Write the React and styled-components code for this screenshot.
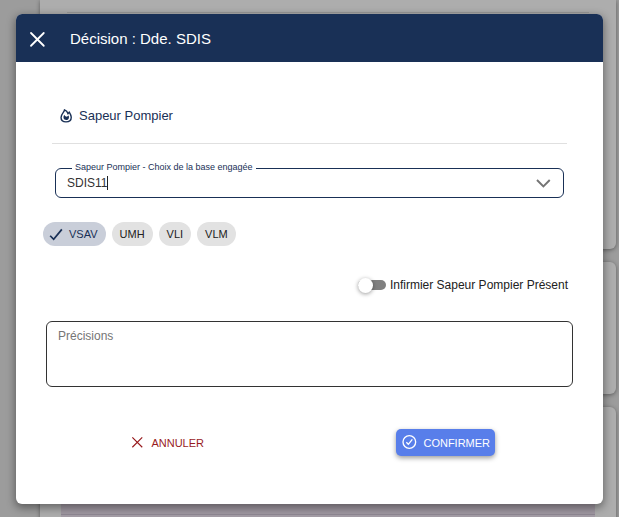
import { useState } from "react";
import styled, { createGlobalStyle } from "styled-components";

const navy = "#193056";

const GlobalStyle = createGlobalStyle`
  * {
    box-sizing: border-box;
  }
  body {
    margin: 0;
    background: #9e9e9e;
    font-family: "Liberation Sans", Arial, sans-serif;
    color: #212121;
  }
  button, input, textarea {
    font-family: inherit;
  }
`;

const Page = styled.div`
  position: relative;
  min-height: 100vh;
`;

const Backdrop = styled.div`
  position: absolute;
  inset: 0;
  display: flex;
  flex-direction: column;
  gap: 13px;
  padding: 0 3px 0 40px;
  overflow: hidden;
  background: #9c9c9c;
`;

const Card = styled.div`
  flex: none;
  height: ${(props) => props.$height};
  padding: ${(props) => props.$padding || "0"};
  background: #adadad;
  border-radius: ${(props) => (props.$first ? "0 0 6px 6px" : "6px")};
  box-shadow: 0 1px 4px rgba(0, 0, 0, 0.4);
`;

const CardLine = styled.div`
  height: 1px;
  margin: 0 6px;
  background: #999;
`;

const CardBand = styled.div`
  height: 100%;
  background: linear-gradient(#a098a2 107px, #8f8893 107px, #8f8893 108px, #a39ca5 108px);
`;

const Dialog = styled.div`
  position: relative;
  padding: 14px 16px 13px;
`;

const DialogCard = styled.section`
  overflow: hidden;
  background: white;
  border-radius: 6px;
  box-shadow: 0 3px 8px 1px rgba(0, 0, 0, 0.4);
`;

const Header = styled.header`
  display: flex;
  align-items: center;
  gap: 24px;
  height: 48px;
  padding: 1px 12px 0;
  background: ${navy};
  color: white;
`;

const CloseButton = styled.button`
  display: flex;
  padding: 0;
  border: 0;
  background: none;
  color: inherit;
`;

const Title = styled.h1`
  margin: 0;
  font-size: 15px;
  font-weight: 400;
  line-height: 21px;
`;

const Section = styled.div`
  display: flex;
  align-items: center;
  gap: 6px;
  margin: 0 36px;
  padding: 44px 7px 17px;
  border-bottom: 1px solid #e0e0e0;
  color: ${navy};
`;

const SectionTitle = styled.h2`
  margin: 0;
  font-size: 13px;
  font-weight: 400;
  line-height: 20px;
`;

const Field = styled.fieldset`
  display: flex;
  align-items: center;
  height: 37px;
  margin: 17px 39px 0;
  padding: 0 11px 7px;
  border: 1px solid ${navy};
  border-radius: 6px;
`;

const Legend = styled.legend`
  margin-left: 5px;
  padding: 0 3px 2px;
  color: ${navy};
  font-size: 9px;
  line-height: 12px;
`;

const FieldInput = styled.input`
  field-sizing: content;
  padding: 0;
  border: 0;
  outline: 0;
  background: none;
  caret-color: transparent;
  color: #333;
  font-size: 12px;
  line-height: 16px;
`;

const Caret = styled.span`
  width: 1px;
  height: 14px;
  background: #212121;
`;

const FieldToggle = styled.button`
  display: flex;
  margin-left: auto;
  padding: 0;
  border: 0;
  background: none;
  color: #757575;
`;

const Chips = styled.div`
  display: flex;
  flex-wrap: wrap;
  gap: 6px;
  margin: 24px 27px 0;
`;

const ChipButton = styled.button`
  display: flex;
  align-items: center;
  gap: 6px;
  height: 24px;
  padding: 0 8px 1px;
  padding-left: ${(props) => (props.$selected ? "6px" : "8px")};
  border: 0;
  border-radius: 12px;
  background: ${(props) => (props.$selected ? "#c9ced9" : "#e2e2e2")};
  color: ${(props) => (props.$selected ? navy : "#212121")};
  font-size: 11px;
  line-height: 16px;
`;

const SwitchRow = styled.label`
  display: flex;
  align-items: center;
  justify-content: flex-end;
  gap: 4px;
  margin: 29px 35px 0;
  font-size: 12px;
  line-height: 20px;
`;

const Switch = styled.input`
  appearance: none;
  display: flex;
  align-items: center;
  width: 28px;
  height: 10px;
  margin: 0;
  border-radius: 5px;
  background: #808080;
  &::before {
    content: "";
    flex: none;
    width: 15px;
    height: 15px;
    border-radius: 50%;
    background: white;
    box-shadow: 0 1px 4px rgba(0, 0, 0, 0.4);
  }
  &:checked {
    justify-content: flex-end;
    background: ${navy};
  }
`;

const Notes = styled.div`
  display: flex;
  margin: 26px 30px 0;
`;

const NotesInput = styled.textarea`
  width: 100%;
  height: 66px;
  padding: 6px 11px;
  border: 1px solid #333;
  border-radius: 6px;
  outline: 0;
  resize: none;
  font-size: 12px;
  line-height: 16px;
  &::placeholder {
    color: #757575;
  }
`;

const Actions = styled.footer`
  display: grid;
  grid-template-columns: 1fr 1fr;
  justify-items: center;
  padding: 42px 18px 48px 12px;
`;

const ActionButton = styled.button`
  display: flex;
  align-items: center;
  gap: 7px;
  height: 27px;
  padding: 0 5px;
  border: 0;
  border-radius: 5px;
  background: none;
  color: #981b1e;
  font-size: 11px;
  line-height: 16px;
  svg {
    margin-bottom: 2px;
  }
`;

const ConfirmButton = styled(ActionButton)`
  gap: 6px;
  background: #587eea;
  color: white;
  box-shadow: 0 2px 5px rgba(0, 0, 0, 0.4);
`;

function Icon({ size, stroke = 2, children }) {
  return (
    <svg
      width={size}
      height={size}
      viewBox="0 0 24 24"
      fill="none"
      stroke="currentColor"
      strokeWidth={stroke}
      aria-hidden="true"
    >
      {children}
    </svg>
  );
}

const vehicles = ["VSAV", "UMH", "VLI", "VLM"];

function App() {
  const [base, setBase] = useState("SDIS11");
  const [selected, setSelected] = useState("VSAV");

  return (
    <Page>
      <GlobalStyle />
      <Backdrop>
        <Card $first $height="249px" $padding="12px 21px">
          <CardLine />
        </Card>
        <Card $height="132px" />
        <Card $height="200px" $padding="0 21px">
          <CardBand />
        </Card>
      </Backdrop>
      <Dialog role="dialog" aria-labelledby="dialog-title">
        <DialogCard>
          <Header>
            <CloseButton aria-label="Fermer">
              <Icon size={18} stroke={2.4}>
                <path d="M4 4L21 21M21 4L4 21" strokeLinecap="round" />
              </Icon>
            </CloseButton>
            <Title id="dialog-title">Décision : Dde. SDIS</Title>
          </Header>
          <Section>
            <Icon size={14} stroke={2.4}>
              <path d="M9.500 1.500C9 6 3.500 8 3.500 14.500C3.500 19 7 22 12 22S21 19 21 14C21 10.500 19 8 17.500 5.500L15.500 8C14.500 5 12.500 2.500 9.500 1.500Z" />
              <path
                d="M9 10C10 12.500 12 13.500 14 13L16.500 11C18 15 16.500 19 12.500 19C7.500 19 6.500 14 9 10Z"
                fill="currentColor"
                stroke="none"
              />
            </Icon>
            <SectionTitle>Sapeur Pompier</SectionTitle>
          </Section>
          <Field>
            <Legend>
              <label htmlFor="base">Sapeur Pompier - Choix de la base engagée</label>
            </Legend>
            <FieldInput id="base" value={base} onChange={(e) => setBase(e.target.value)} />
            <Caret />
            <FieldToggle aria-label="Ouvrir la liste">
              <Icon size={18} stroke={2.6}>
                <path d="M4 8L12.500 16.500L21 8" />
              </Icon>
            </FieldToggle>
          </Field>
          <Chips>
            {vehicles.map((name) => (
              <ChipButton
                key={name}
                $selected={name === selected}
                aria-pressed={name === selected}
                onClick={() => setSelected(name)}
              >
                {name === selected && (
                  <Icon size={14} stroke={3}>
                    <path d="M2 15L8 21L22 4" />
                  </Icon>
                )}
                {name}
              </ChipButton>
            ))}
          </Chips>
          <SwitchRow>
            <Switch type="checkbox" role="switch" />
            Infirmier Sapeur Pompier Présent
          </SwitchRow>
          <Notes>
            <NotesInput aria-label="Précisions" placeholder="Précisions" />
          </Notes>
          <Actions>
            <ActionButton>
              <Icon size={14}>
                <path d="M4 4L21 21M21 4L4 21" />
              </Icon>
              ANNULER
            </ActionButton>
            <ConfirmButton>
              <Icon size={16}>
                <circle cx="12.500" cy="12" r="9.500" />
                <path d="M8 12.500L11 15.500L17 8" />
              </Icon>
              CONFIRMER
            </ConfirmButton>
          </Actions>
        </DialogCard>
      </Dialog>
    </Page>
  );
}

export default App;
